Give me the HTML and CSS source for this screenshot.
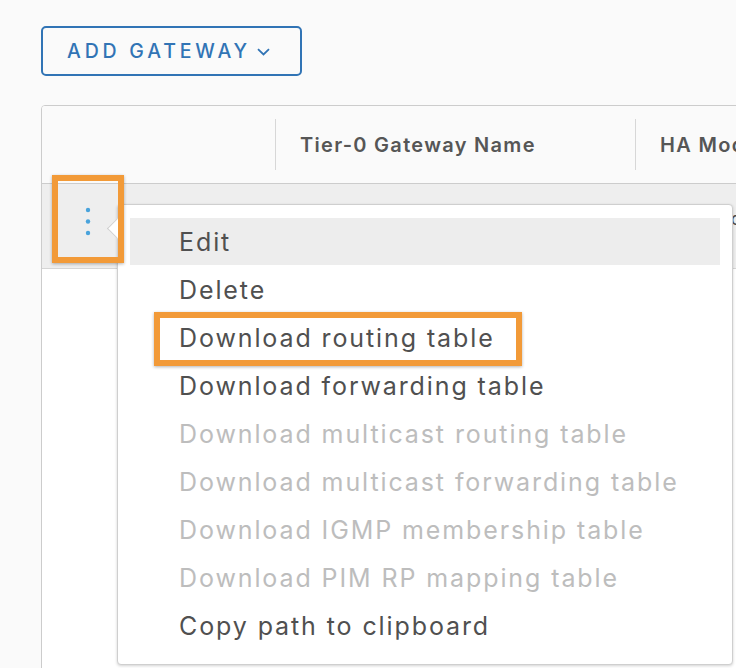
FILE: index.html
```html
<!DOCTYPE html>
<html lang="en">
<head>
<meta charset="utf-8">
<title>Tier-0 Gateways</title>
<link rel="stylesheet" href="styles.css">
</head>
<body>
<div class="page">
  <div class="toolbar">
    <button class="add-btn">ADD GATEWAY<svg class="chev" width="13" height="8" viewBox="0 0 13 8"><polyline points="1,1.2 6.5,6.5 12,1.2" fill="none" stroke="#3174b5" stroke-width="1.8"/></svg></button>
  </div>
  <div class="grid">
    <div class="grid-head">
      <div class="th th-action"></div>
      <div class="th th-name"><span>Tier-0 Gateway Name</span></div>
      <div class="th th-ha"><span>HA Mode</span></div>
    </div>
    <div class="grid-row">
      <div class="td td-action">
        <svg width="8" height="30" viewBox="0 0 8 30"><circle cx="4" cy="3" r="2.2" fill="#49a3dc"/><circle cx="4" cy="14.5" r="2.2" fill="#49a3dc"/><circle cx="4" cy="26" r="2.2" fill="#49a3dc"/></svg>
      </div>
      <div class="td td-name">T0-Gateway-01</div>
      <div class="td td-ha">Active Active</div>
    </div>
  </div>

  <div class="menu">
    <div class="menu-item active">Edit</div>
    <div class="menu-item">Delete</div>
    <div class="menu-item">Download routing table</div>
    <div class="menu-item">Download forwarding table</div>
    <div class="menu-item disabled">Download multicast routing table</div>
    <div class="menu-item disabled">Download multicast forwarding table</div>
    <div class="menu-item disabled">Download IGMP membership table</div>
    <div class="menu-item disabled">Download PIM RP mapping table</div>
    <div class="menu-item">Copy path to clipboard</div>
  </div>

  <div class="annot annot-kebab"></div>
  <div class="annot annot-item"></div>
</div>
</body>
</html>
```
FILE: styles.css
```css
html, body {
  margin: 0;
  padding: 0;
  background: #fafafa;
  overflow: hidden;
}
body {
  font-family: "Inter", "Open Sans", sans-serif;
  color: #4d4d4d;
}
.page {
  position: relative;
  width: 736px;
  height: 668px;
  overflow: hidden;
  padding-left: 41px;
  box-sizing: border-box;
}
.toolbar {
  padding-top: 26px;
  display: flex;
}
.add-btn {
  display: flex;
  align-items: center;
  box-sizing: border-box;
  width: 261px;
  height: 50px;
  padding: 0 0 0 24px;
  border: 2px solid #3174b5;
  border-radius: 5px;
  background: #fafafa;
  color: #3174b5;
  font-family: "Inter", "Open Sans", sans-serif;
  font-size: 19.5px;
  font-weight: 500;
  letter-spacing: 3.8px;
}
.chev {
  margin-left: 6px;
  margin-top: 1px;
}
.grid {
  margin-top: 29px;
  width: 800px;
  height: 700px;
  box-sizing: border-box;
  border: 1px solid #cccccc;
  border-radius: 4px;
  background: #ffffff;
  overflow: hidden;
}
.grid-head {
  display: flex;
  background: #fafafa;
  border-bottom: 1px solid #cccccc;
  box-sizing: border-box;
  height: 78px;
}
.th {
  flex-shrink: 0;
  display: flex;
  align-items: center;
  font-size: 20px;
  font-weight: 600;
  letter-spacing: 1.3px;
  color: #565656;
}
.th-action { width: 233px; }
.th-name, .th-ha {
  border-left: 1px solid #d7d7d7;
  margin: 13px 0;
  padding-left: 24px;
  box-sizing: border-box;
}
.th-name { width: 360px; }
.th-ha { width: 200px; }
.grid-row {
  display: flex;
  height: 85px;
  background: #eeeeee;
  border-bottom: 1px solid #d5d5d5;
  box-sizing: border-box;
}
.td {
  flex-shrink: 0;
  font-size: 18px;
  color: #4d4d4d;
  padding-top: 24px;
  box-sizing: border-box;
}
.td-action {
  width: 92px;
  display: flex;
  justify-content: center;
  padding-top: 23px;
}
.td-name { width: 501px; padding-left: 25px; }
.td-ha { padding-left: 25px; white-space: nowrap; }

.menu {
  position: absolute;
  left: 117px;
  top: 204px;
  width: 616px;
  height: 461px;
  box-sizing: border-box;
  background: #ffffff;
  border: 1px solid #cfcfcf;
  border-radius: 4px;
  box-shadow: 0 1px 3px rgba(0,0,0,0.18);
  padding: 13px 12px 0 12px;
  display: flex;
  flex-direction: column;
}
.menu::before {
  content: "";
  position: absolute;
  left: -8px;
  top: 16px;
  width: 14px;
  height: 14px;
  background: #ffffff;
  border-left: 1px solid #cfcfcf;
  border-bottom: 1px solid #cfcfcf;
  transform: rotate(45deg);
}
.menu-item {
  height: 48px;
  display: flex;
  align-items: center;
  padding-left: 49px;
  font-size: 25px;
  font-weight: 400;
  letter-spacing: 1.9px;
  color: #505050;
  white-space: nowrap;
}
.menu-item.active {
  background: #ededed;
  height: 47px;
  margin-bottom: 1px;
}
.menu-item.disabled {
  color: #bdbdbd;
}
.annot {
  position: absolute;
  box-sizing: border-box;
  border: 6px solid #f29a38;
  box-shadow: 0 1px 3px rgba(0,0,0,0.3);
}
.annot-kebab {
  left: 52px;
  top: 175px;
  width: 72px;
  height: 88px;
}
.annot-item {
  left: 154px;
  top: 312px;
  width: 368px;
  height: 54px;
}
```
